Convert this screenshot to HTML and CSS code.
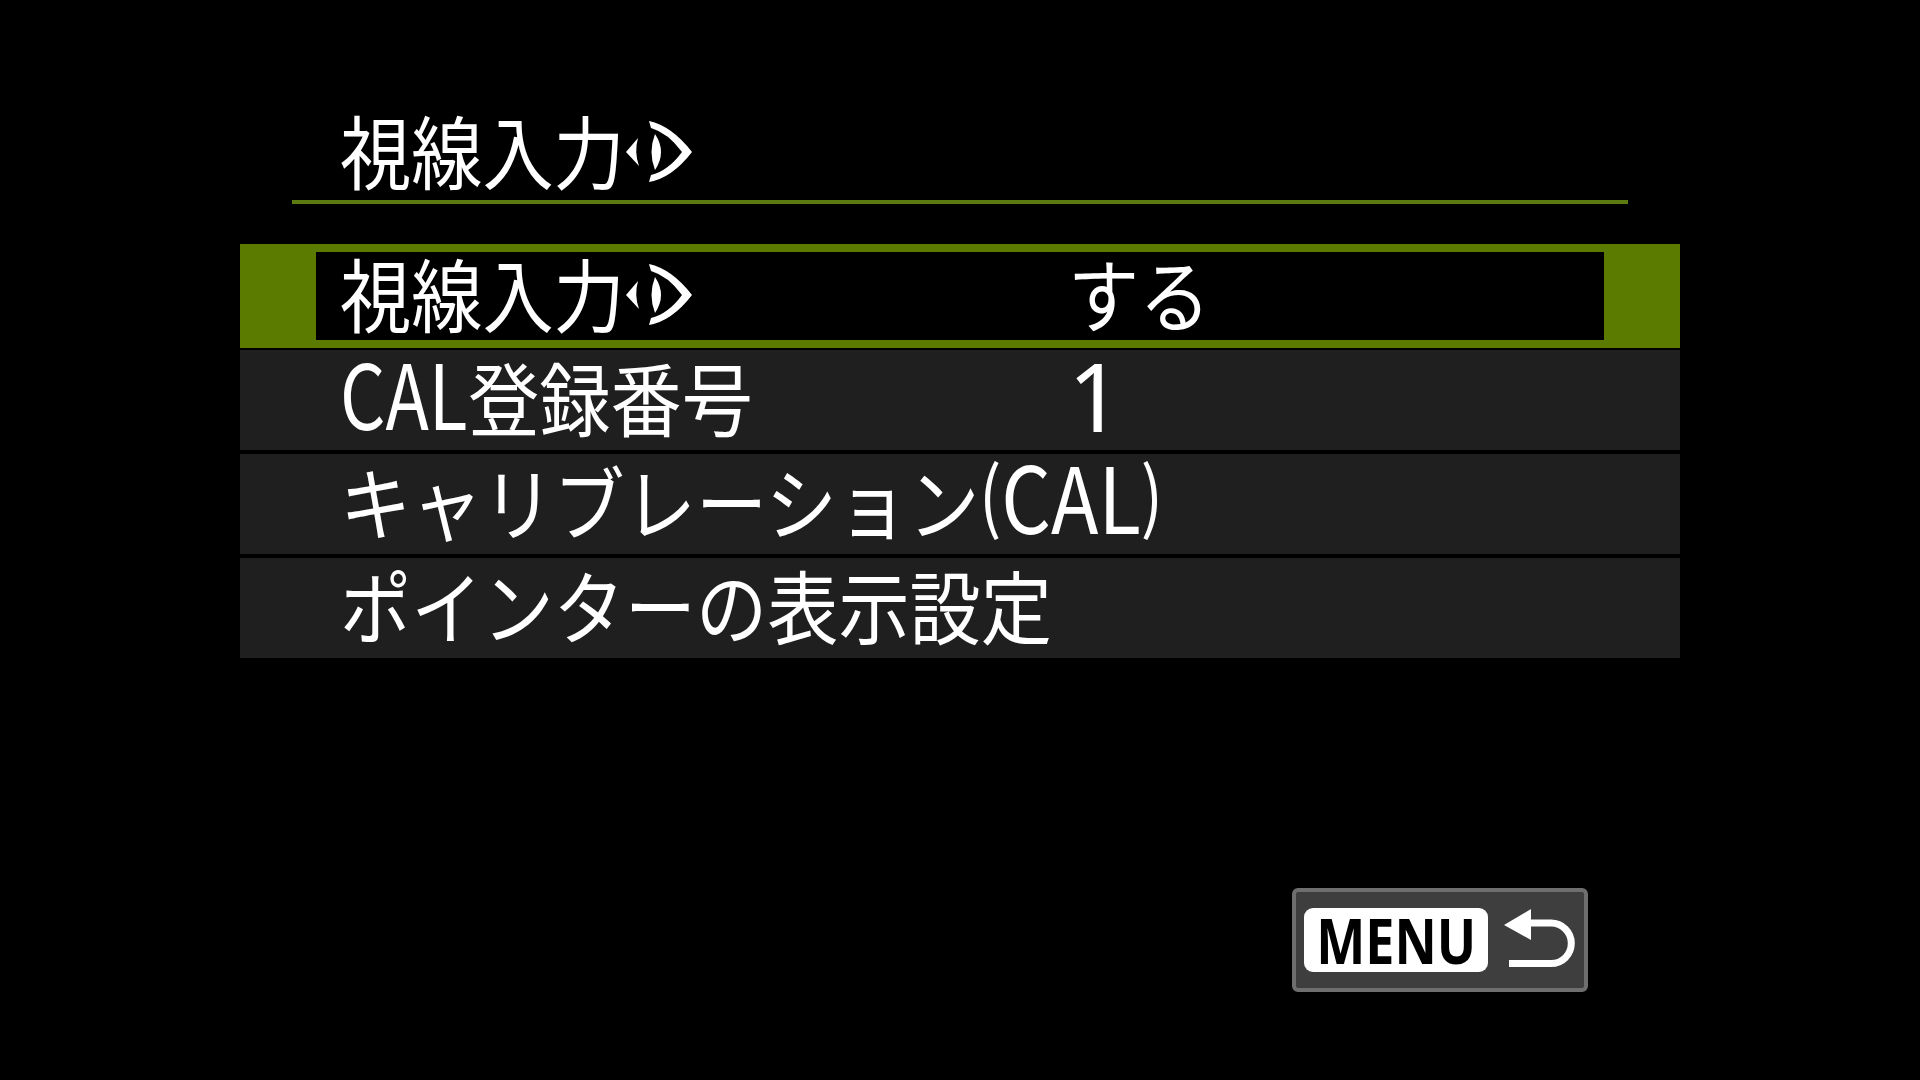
FILE: index.html
```html
<!DOCTYPE html>
<html lang="ja">
<head>
    <meta charset="UTF-8">
    <title>視線入力</title>
    <link rel="stylesheet" href="styles.css">
</head>
<body>

<div class="screen">
    <div class="header">
        <span class="txt eye-txt">視線入力</span>
        <svg class="eye" viewBox="0 0 68 64"><path d="M2 31 L14 17 Q10 31 15 45Z M31 13 Q24 31 31 49 Q37 40 37 31 Q37 22 31 13Z M25 0 Q48 5 68 31 Q48 57 25 61 L27 54 Q44 50 58 31 Q44 12 27 7Z"/></svg>
    </div>

    <div class="list">
        <div class="row selected">
            <div class="label">
                <span class="txt eye-txt">視線入力</span>
                <svg class="eye" viewBox="0 0 68 64"><path d="M2 31 L14 17 Q10 31 15 45Z M31 13 Q24 31 31 49 Q37 40 37 31 Q37 22 31 13Z M25 0 Q48 5 68 31 Q48 57 25 61 L27 54 Q44 50 58 31 Q44 12 27 7Z"/></svg>
            </div>
            <div class="value"><span class="txt">する</span></div>
        </div>
        <div class="row">
            <div class="label"><span class="txt"><span class="latin">CAL</span>登録番号</span></div>
            <div class="value"><span class="num">1</span></div>
        </div>
        <div class="row">
            <div class="label"><span class="txt">キャリブレーション<span class="latin paren"><span class="bracket">(</span>CAL<span class="bracket">)</span></span></span></div>
        </div>
        <div class="row">
            <div class="label"><span class="txt">ポインターの表示設定</span></div>
        </div>
    </div>

    <div class="menu-btn">
        <span class="menu-key"><span class="menu-word">MENU</span></span>
        <svg class="back" viewBox="0 0 76 62">
            <path class="back-head" d="M0 16 L27 0 V31Z"/>
            <path class="back-line" d="M25 14 H47 A20.3 20.3 0 0 1 47 54.6 H5"/>
        </svg>
    </div>
</div>

</body>
</html>
```

FILE: styles.css
```css
body {
    margin: 0;
    background-color: #000;
    color: #fff;
    font-family: "Noto Sans CJK JP", "Noto Sans", sans-serif;
}
.screen {
    width: 1440px;
    height: 1080px;
    margin-left: 240px;
    display: flex;
    flex-direction: column;
}
.txt {
    display: inline-block;
    font-size: 80px;
    line-height: 100px;
    margin-bottom: 10px;
    white-space: nowrap;
    transform: scaleX(0.89);
    transform-origin: left center;
}
.latin {
    display: inline-block;
    width: 144px;
    font-size: 90px;
    line-height: 80px;
    transform: scaleX(0.89);
    transform-origin: left center;
}
.paren {
    width: 209px;
    font-size: 92px;
    transform: scaleX(0.952);
}
.bracket {
    font-size: 78px;
    vertical-align: 9px;
}
.num {
    display: block;
    font-family: "Noto Sans", sans-serif;
    font-size: 95px;
    line-height: 100px;
    margin-bottom: 10px;
}
.eye-txt {
    width: 284px;
}
.eye {
    width: 68px;
    height: 64px;
    fill: #fff;
    flex: none;
}
.header {
    height: 94px;
    margin: 0 52px;
    padding: 106px 0 0 48px;
    border-bottom: 4px solid #5b7a10;
    display: flex;
    align-items: center;
}
.list {
    margin-top: 40px;
    display: flex;
    flex-direction: column;
    gap: 4px;
}
.row {
    height: 100px;
    background-color: #1f1f1f;
    display: flex;
    align-items: center;
    padding-left: 100px;
}
.row.selected {
    height: 88px;
    padding-left: 24px;
    margin-bottom: -2px;
    background-color: #000;
    border-style: solid;
    border-color: #5b7a00;
    border-width: 8px 76px;
}
.label {
    width: 728px;
    display: flex;
    align-items: center;
}
.menu-btn {
    width: 280px;
    height: 96px;
    margin-top: 230px;
    margin-left: 1052px;
    padding-left: 8px;
    background-color: #3e3e3e;
    border: 4px solid #6e6e6e;
    border-radius: 6px;
    display: flex;
    align-items: center;
}
.menu-key {
    width: 184px;
    height: 64px;
    background-color: #fff;
    border-radius: 9px;
    display: flex;
    align-items: center;
    justify-content: center;
}
.menu-word {
    display: inline-block;
    font-family: "Noto Sans", sans-serif;
    font-weight: 700;
    font-size: 62px;
    line-height: 64px;
    color: #000;
    transform: scaleX(0.84);
}
.back {
    width: 76px;
    height: 62px;
    margin-left: 16px;
    overflow: visible;
}
.back-head {
    fill: #fff;
}
.back-line {
    fill: none;
    stroke: #fff;
    stroke-width: 7;
}
```
